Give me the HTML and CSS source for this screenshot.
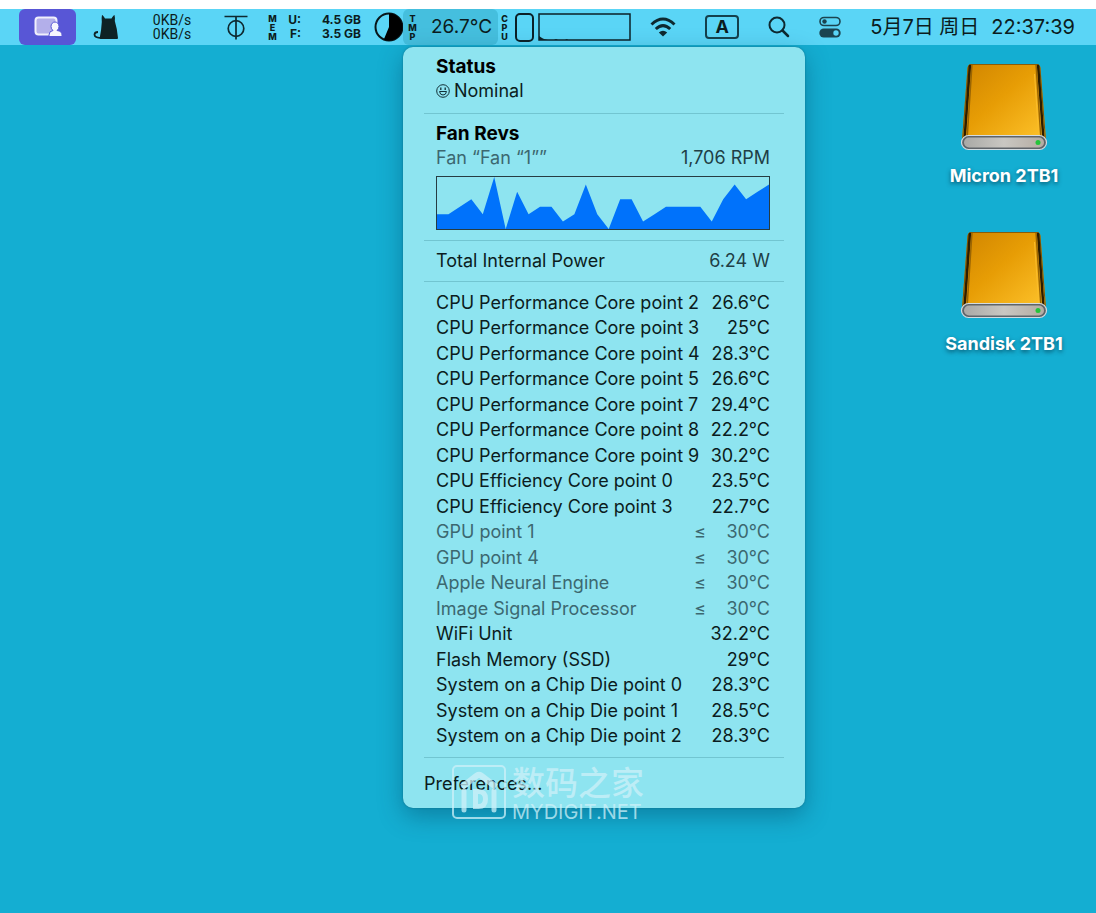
FILE: index.html
```html
<!DOCTYPE html>
<html lang="zh-CN">
<head>
<meta charset="utf-8">
<meta name="viewport" content="width=device-width, initial-scale=1">
<title>Desktop</title>
<link rel="stylesheet" href="styles.css">
</head>
<body>
<header class="menubar">
  <div class="menubar-left">
    <button class="item share" aria-label="Screen sharing">
      <svg width="28" height="22" viewBox="0 0 28 22"><rect x="1.5" y="1.5" width="21" height="17" rx="3" fill="#b3afea" stroke="#f0effc" stroke-width="2"/><path d="M15 20.5v-1.5q0-4 4-4.500q-2-1.500-2-4a4 4.500 0 0 1 8 0q0 2.500-2 4q5 .5 5 4.500v1.500z" fill="#f6f5fe" stroke="#5856d6" stroke-width="1"/></svg>
    </button>
    <button class="item cat" aria-label="Cat">
      <svg width="26" height="26" viewBox="0 0 26 26"><path d="M9 1q1 0 3 3.500h6.500q2-3.500 3-3.500q.8 3 .3 6q2.500 8 3.200 17q0 1-1 1H8q-1.500 0-1.300-1Q8.500 15 8.800 8Q8.300 4 9 1z" fill="#0e2225"/><path d="M9 24q-7.500 0-7.500-3.500q.3-2.500 3.500-2.500" fill="none" stroke="#0e2225" stroke-width="1.800"/></svg>
    </button>
    <button class="item net"><span>0KB/s</span><span>0KB/s</span></button>
    <button class="item tuner" aria-label="Alignment">
      <svg width="24" height="26" viewBox="0 0 24 26" fill="none" stroke="#0e2930" stroke-width="1.700"><path d="M.5 2.500h23M12 2.500v23"/><circle cx="12" cy="14.500" r="7.800"/></svg>
    </button>
    <button class="item mem">
      <span class="tag"><span>M</span><span>E</span><span>M</span></span>
      <span class="mem-key"><span>U:</span><span>F:</span></span>
      <span class="mem-value"><span>4.5 GB</span><span>3.5 GB</span></span>
      <svg width="30" height="30" viewBox="0 0 30 30"><circle cx="15" cy="15" r="13.500" fill="none" stroke="#08161a" stroke-width="2"/><path d="M15 1.500A13.500 13.500 0 1 1 9.800 27.500L15 15z" fill="#000"/></svg>
    </button>
    <div class="temp-anchor">
      <button class="item temp" aria-expanded="true">
        <span class="tag"><span>T</span><span>M</span><span>P</span></span>
        <span>26.7°C</span>
      </button>
      <section class="popup" aria-label="Temperature">
        <div class="block status">
          <h2>Status</h2>
          <p class="line nominal"><svg width="14" height="14" viewBox="0 0 14 14" fill="none" stroke="#123037"><circle cx="7" cy="7" r="6.300"/><path d="M3.500 7.500q.5 3.500 3.500 3.500t3.500-3.500z"/><path d="M4.800 3.500v2.500M9.200 3.500v2.500" stroke-width="1.300"/></svg>Nominal</p>
        </div>
        <div class="block fan">
          <h2>Fan Revs</h2>
          <p class="line"><span class="muted">Fan “Fan “1””</span><span class="soft">1,706 RPM</span></p>
          <svg class="chart" viewBox="0 0 29 7" preserveAspectRatio="none" role="img" aria-label="Fan speed history"><path fill="#0072fb" d="M0 7V5H1L2 4L3 3L4 5L5 0L6 7L7 2L8 5L9 4H10L11 6L12 5L13 1L14 5L15 7L16 3H17L18 6L19 5L20 4H23L24 6L25 3L26 1L27 3L28 2L29 1V7z"/></svg>
        </div>
        <div class="block power">
          <p class="line"><span>Total Internal Power</span><span class="soft">6.24 W</span></p>
        </div>
        <div class="block sensors">
          <table>
            <colgroup><col><col class="col-sign"><col class="col-value"></colgroup>
            <tbody>
            <tr><th scope="row" colspan="2">CPU Performance Core point 2</th><td>26.6°C</td></tr>
            <tr><th scope="row" colspan="2">CPU Performance Core point 3</th><td>25°C</td></tr>
            <tr><th scope="row" colspan="2">CPU Performance Core point 4</th><td>28.3°C</td></tr>
            <tr><th scope="row" colspan="2">CPU Performance Core point 5</th><td>26.6°C</td></tr>
            <tr><th scope="row" colspan="2">CPU Performance Core point 7</th><td>29.4°C</td></tr>
            <tr><th scope="row" colspan="2">CPU Performance Core point 8</th><td>22.2°C</td></tr>
            <tr><th scope="row" colspan="2">CPU Performance Core point 9</th><td>30.2°C</td></tr>
            <tr><th scope="row" colspan="2">CPU Efficiency Core point 0</th><td>23.5°C</td></tr>
            <tr><th scope="row" colspan="2">CPU Efficiency Core point 3</th><td>22.7°C</td></tr>
            <tr class="muted"><th scope="row">GPU point 1</th><td class="sign">≤</td><td>30°C</td></tr>
            <tr class="muted"><th scope="row">GPU point 4</th><td class="sign">≤</td><td>30°C</td></tr>
            <tr class="muted"><th scope="row">Apple Neural Engine</th><td class="sign">≤</td><td>30°C</td></tr>
            <tr class="muted"><th scope="row">Image Signal Processor</th><td class="sign">≤</td><td>30°C</td></tr>
            <tr><th scope="row" colspan="2">WiFi Unit</th><td>32.2°C</td></tr>
            <tr><th scope="row" colspan="2">Flash Memory (SSD)</th><td>29°C</td></tr>
            <tr><th scope="row" colspan="2">System on a Chip Die point 0</th><td>28.3°C</td></tr>
            <tr><th scope="row" colspan="2">System on a Chip Die point 1</th><td>28.5°C</td></tr>
            <tr><th scope="row" colspan="2">System on a Chip Die point 2</th><td>28.3°C</td></tr>
            </tbody>
          </table>
        </div>
        <button class="prefs">Preferences...</button>
        <div class="watermark">
          <svg width="54" height="54" viewBox="0 0 54 54" fill="none" stroke="currentColor"><rect x="1" y="1" width="52" height="52" rx="4" stroke-width="2"/><path d="M10 22L25 10.500q2-1.500 4 0L44 22" stroke-width="6"/><path d="M12 26v19M42 26v19" stroke-width="5" stroke-linecap="round"/><path d="M23.500 26.500v15h3q7 0 7-7.500t-7-7.500z" stroke-width="5"/></svg>
          <div class="watermark-text"><strong>数码之家</strong><span>MYDIGIT.NET</span></div>
        </div>
      </section>
    </div>
    <button class="item cpu" aria-label="CPU usage">
      <span class="tag"><span>C</span><span>P</span><span>U</span></span>
      <span class="cpu-gauge"></span>
      <svg class="cpu-graph" width="93" height="28" viewBox="0 0 93 28"><rect x="1" y="1" width="91" height="26" fill="none" stroke="#0b2027" stroke-width="1.500"/><path d="M1 27v-4l3 2 2 1 4 1h6l2-1 2 1h7l2-1 1 1z" fill="#0b2027"/></svg>
    </button>
  </div>
  <div class="menubar-right">
    <button class="item" aria-label="Wi-Fi">
      <svg width="26" height="20" viewBox="0 0 26 20" fill="none" stroke="#0e2930" stroke-width="3"><path d="M1.500 7.500q11.500-11 23 0M5.800 12q7.200-6.800 14.400 0"/><path d="M8.800 15.500q4.200-3.600 8.400 0L13 19.500z" fill="#0e2930" stroke="none"/></svg>
    </button>
    <button class="item" aria-label="Input source"><span class="input-source">A</span></button>
    <button class="item" aria-label="Search">
      <svg width="22" height="22" viewBox="0 0 22 22" fill="none" stroke="#0e2930" stroke-width="2" stroke-linecap="round"><circle cx="9" cy="9" r="7.500"/><path d="M14.500 14.500L20 20" stroke-width="2.500"/></svg>
    </button>
    <button class="item" aria-label="Control Center">
      <svg width="22" height="22" viewBox="0 0 22 22"><rect x="1" y="1.500" width="20" height="8" rx="4" fill="none" stroke="#1b4450" stroke-width="1.600"/><circle cx="5.500" cy="5.500" r="2.200" fill="#1b4450"/><rect x=".3" y="12.500" width="21.400" height="9" rx="4.500" fill="#1b4450"/><circle cx="17" cy="17" r="2.700" fill="#5ad5f6"/></svg>
    </button>
    <button class="item clock"><span>5月7日 周日</span><span>22:37:39</span></button>
  </div>
</header>
<main class="desktop">
  <svg width="0" height="0" class="defs" aria-hidden="true">
    <defs>
      <linearGradient id="gold" x1="0" y1="0" x2="1" y2="1"><stop offset="0" stop-color="#cf8400"/><stop offset=".45" stop-color="#e79d05"/><stop offset="1" stop-color="#ffc52e"/></linearGradient>
      <linearGradient id="silver"><stop offset="0" stop-color="#a9a9a6"/><stop offset=".5" stop-color="#c9c7c2"/><stop offset="1" stop-color="#b4aca2"/></linearGradient>
      <clipPath id="body"><path d="M12 0h64q4 0 4.500 4L86 76H2L7.500 4Q8 0 12 0z"/></clipPath>
      <symbol id="drive" viewBox="0 0 88 88">
        <g clip-path="url(#body)" fill="none">
          <path d="M0 0h88v78H0z" fill="url(#gold)"/>
          <path d="M8 0L2 76M80 0L86 76" stroke="#7a5608" stroke-width="2"/>
          <path d="M10 0L4.500 76M78 0L83.500 76" stroke="#2c1d00" stroke-width="2.500"/>
          <path d="M12 0L7 76M76 0L81 76" stroke="#9a6503" stroke-width="1.500"/>
          <path d="M74.500 10L79 76" stroke="#fbbd2c" stroke-width="1"/>
          <path d="M7 .5h74" stroke="#8a5c08"/>
        </g>
        <rect x="1.500" y="71.500" width="85" height="14" rx="7" fill="#5f6469" stroke="#d3dbe0" stroke-width="1.200"/>
        <rect x="4" y="73.500" width="80" height="10" rx="5" fill="url(#silver)"/>
        <circle cx="78" cy="78.500" r="2.500" fill="#25c43a"/>
      </symbol>
    </defs>
  </svg>
  <a class="volume" href="#micron"><svg width="88" height="88"><use href="#drive"/></svg><span>Micron 2TB1</span></a>
  <a class="volume" href="#sandisk"><svg width="88" height="88"><use href="#drive"/></svg><span>Sandisk 2TB1</span></a>
</main>
</body>
</html>
```
FILE: styles.css
```css
* { box-sizing: border-box; }

body {
  margin: 0;
  padding-top: 9px;
  min-height: 100vh;
  display: flex;
  flex-direction: column;
  background: #fff;
  color: #0b1c20;
  font: 18px/24px Inter, "Noto Sans CJK SC", sans-serif;
}

button {
  border: 0;
  padding: 0;
  background: none;
  color: inherit;
  font: inherit;
  text-align: left;
}

svg { display: block; flex: none; }
h2, p { margin: 0; }

.menubar {
  display: flex;
  height: 36px;
  background: #5ad5f6;
  position: relative;
  z-index: 1;
}

.menubar-left, .menubar-right { display: flex; }
.menubar-left { padding-left: 19px; }
.menubar-right { margin-left: auto; padding-right: 21px; gap: 29px; }

.item {
  display: flex;
  align-items: center;
  height: 36px;
  white-space: nowrap;
}

.share {
  width: 57px;
  justify-content: center;
  border-radius: 6px;
  background: #5856d6;
}

.cat { margin-left: 17px; }

.net {
  width: 40px;
  margin-left: 33px;
  flex-direction: column;
  justify-content: center;
  font: 14px/14px Roboto, sans-serif;
}

.tuner { margin-left: 32px; }
.mem { margin-left: 20px; }

.tag {
  display: flex;
  flex-direction: column;
  align-items: center;
  width: 9px;
  font-size: 9px;
  line-height: 9px;
  font-weight: 800;
}

.mem-key, .mem-value {
  display: flex;
  flex-direction: column;
  align-items: flex-end;
  font-size: 12px;
  line-height: 14px;
  font-weight: 700;
}

.mem-key { width: 24px; }
.mem-value { width: 60px; }
.mem svg { margin-left: 13px; }

.temp-anchor { position: relative; margin-left: -1px; }

.temp {
  width: 95px;
  padding-left: 5px;
  gap: 14px;
  border-radius: 6px;
  background: #45bfde;
  font-size: 19px;
}

.cpu { margin-left: 2px; }

.cpu-gauge {
  width: 19px;
  height: 29px;
  margin: 0 4px 0 6px;
  border: 2px solid #0b2027;
  border-radius: 5px;
}

.input-source {
  width: 34px;
  height: 24px;
  border: 2px solid #14404c;
  border-radius: 4px;
  font-weight: 700;
  line-height: 20px;
  text-align: center;
}

.clock { gap: 12px; font-size: 20px; }

.popup {
  position: absolute;
  top: 38px;
  left: 0;
  width: 402px;
  padding: 8px 21px 12px;
  border-radius: 10px;
  background: #8ee4f0;
  box-shadow: 0 0 2px #0b6f8a, 0 8px 24px rgba(0, 60, 90, .4);
}

.block {
  padding: 8px 14px 8px 12px;
  border-bottom: 1px solid #72c5d1;
}

.block.status { padding-top: 0; padding-bottom: 10px; }
.block.fan { padding-bottom: 10px; }

h2 { font-size: 19px; line-height: 24px; font-weight: 700; color: #000; }

.line { display: flex; justify-content: space-between; }
.nominal { justify-content: flex-start; align-items: center; gap: 4px; }
.muted { color: #3c6870; }
.soft { color: #1f3f46; }

.chart {
  width: 100%;
  height: 54px;
  margin-top: 6px;
  border: 1px solid #263c42;
}

.sensors table {
  width: 100%;
  height: 459px;
  table-layout: fixed;
  border-collapse: collapse;
}

.col-sign { width: 20px; }
.col-value { width: 60px; }

.sensors th, .sensors td { padding: 0; font-weight: 400; white-space: nowrap; }
.sensors th { text-align: left; }
.sensors td { text-align: right; }
.sensors .sign { text-align: center; }

.prefs { display: block; margin-top: 13px; line-height: 25px; }

.watermark {
  position: absolute;
  left: 49px;
  bottom: -18px;
  display: flex;
  align-items: center;
  gap: 6px;
  color: rgba(205, 240, 248, .75);
  pointer-events: none;
}

.watermark-text { display: flex; flex-direction: column; padding-top: 6px; }
.watermark-text strong { font: 500 33px/34px "Noto Sans CJK SC", sans-serif; }
.watermark-text span { font-size: 20px; line-height: 28px; }

.desktop {
  flex: 1;
  display: flex;
  flex-direction: column;
  align-items: flex-end;
  gap: 32px;
  padding: 19px 27px;
  background: #14aed2;
}

.defs { position: absolute; }

.volume {
  display: flex;
  flex-direction: column;
  align-items: center;
  gap: 12px;
  min-width: 130px;
  height: 136px;
  color: #fff;
  font-weight: 700;
  text-decoration: none;
  text-shadow: 0 2px 4px rgba(0, 50, 70, .7);
  white-space: nowrap;
}
```
